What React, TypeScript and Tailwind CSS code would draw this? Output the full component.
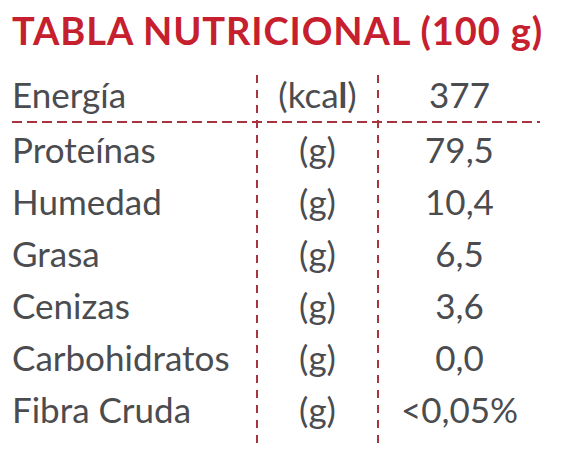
import React from 'react';

const rows = [
  { name: 'Proteínas', unit: '(g)', value: '79,5' },
  { name: 'Humedad', unit: '(g)', value: '10,4' },
  { name: 'Grasa', unit: '(g)', value: '6,5' },
  { name: 'Cenizas', unit: '(g)', value: '3,6' },
  { name: 'Carbohidratos', unit: '(g)', value: '0,0' },
  { name: 'Fibra Cruda', unit: '(g)', value: '<0,05%' },
];

const App = () => {
  return (
    <div
      className="w-[563px] h-[459px] bg-white text-[#4b4c50] overflow-hidden"
      style={{ fontFamily: 'Lato, "Open Sans", sans-serif' }}
    >
      {/* Title */}
      <h1 className="pt-[11px] pl-3 text-[38px] leading-[38px] tracking-[0.9px] font-bold text-[#c6202f] whitespace-nowrap">
        TABLA NUTRICIONAL (100 g)
      </h1>

      {/* Table */}
      <div className="mt-[19px] ml-3 grid grid-cols-[244px_2px_119px_2px_161px] text-[35px] leading-[52px]">
        {/* vertical dashed dividers */}
        <div className="col-start-2 row-[1/10] mt-[7px] bg-[repeating-linear-gradient(to_bottom,#a8343f_0_8px,transparent_8px_15px)]" />
        <div className="col-start-4 row-[1/10] mt-[7px] bg-[repeating-linear-gradient(to_bottom,#a8343f_0_8px,transparent_8px_15px)]" />

        {/* header row */}
        <div className="col-start-1 row-start-1 h-[53px]">Energía</div>
        <div className="col-start-3 row-start-1 h-[53px] text-center">
          (kca<span className="font-bold">l</span>)
        </div>
        <div className="col-start-5 row-start-1 h-[53px] text-center">377</div>

        {/* horizontal dashed line */}
        <div className="col-[1/6] row-start-2 h-[2px] bg-[repeating-linear-gradient(to_right,#a8343f_0_10px,transparent_10px_15px)]" />

        {rows.map((r, i) => (
          <React.Fragment key={r.name}>
            <div className="col-start-1 h-[52px]" style={{ gridRowStart: i + 3 }}>
              {r.name}
            </div>
            <div className="col-start-3 h-[52px] text-center" style={{ gridRowStart: i + 3 }}>
              {r.unit}
            </div>
            <div className="col-start-5 h-[52px] text-center" style={{ gridRowStart: i + 3 }}>
              {r.value}
            </div>
          </React.Fragment>
        ))}

        {/* spacer so the dividers run past the last row */}
        <div className="col-start-1 row-start-9 h-[12px]" />
      </div>
    </div>
  );
};

export default App;
